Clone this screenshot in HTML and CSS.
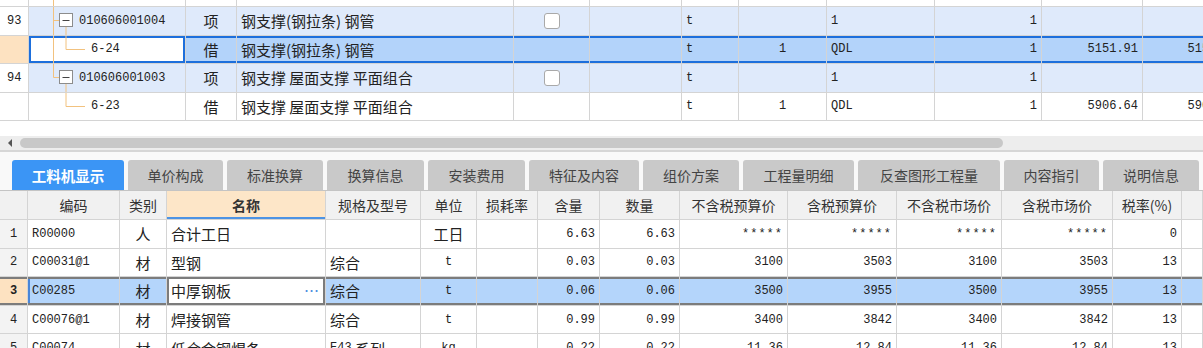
FILE: index.html
```html
<!DOCTYPE html>
<html lang="zh">
<head>
<meta charset="utf-8">
<link rel="stylesheet" href="styles.css">
</head>
<body>
<div class="page">
  <div class="tgrid">
    <div class="trow part">
      <div class="cell"></div>
      <div class="cell tree"><svg class="tl" width="50" height="7"><line x1="24.5" y1="0" x2="24.5" y2="7"/></svg></div>
      <div class="cell"></div><div class="cell"></div><div class="cell"></div><div class="cell"></div><div class="cell"></div><div class="cell"></div><div class="cell"></div><div class="cell"></div><div class="cell"></div><div class="cell"></div>
    </div>
    <div class="trow item">
      <div class="cell m num">93</div>
      <div class="cell tree m"><svg class="tl" width="50" height="29"><line x1="24.5" y1="0" x2="24.5" y2="29"/><line x1="24.5" y1="14.5" x2="30" y2="14.5"/><line x1="37" y1="20.5" x2="37" y2="29"/><rect class="bx" x="30.5" y="7.5" width="13" height="13"/><line class="mn" x1="33.5" y1="14.5" x2="40.5" y2="14.5"/></svg>010606001004</div>
      <div class="cell c">项</div>
      <div class="cell">钢支撑(钢拉条) 钢管</div>
      <div class="cell c"><span class="chk"></span></div>
      <div class="cell"></div>
      <div class="cell m">t</div>
      <div class="cell"></div>
      <div class="cell m">1</div>
      <div class="cell m r">1</div>
      <div class="cell"></div>
      <div class="cell"></div>
    </div>
    <div class="trow sel">
      <div class="cell num hl"></div>
      <div class="cell tree m"><svg class="tl" width="62" height="29"><line x1="24.5" y1="0" x2="24.5" y2="29"/><line x1="37" y1="0" x2="37" y2="14.5"/><line x1="37" y1="14.5" x2="56" y2="14.5"/></svg>6-24</div>
      <div class="cell c">借</div>
      <div class="cell">钢支撑(钢拉条) 钢管</div>
      <div class="cell"></div>
      <div class="cell"></div>
      <div class="cell m">t</div>
      <div class="cell m c">1</div>
      <div class="cell m">QDL</div>
      <div class="cell m r">1</div>
      <div class="cell m r">5151.91</div>
      <div class="cell m r">5151.91</div>
    </div>
    <div class="trow item">
      <div class="cell m num">94</div>
      <div class="cell tree m"><svg class="tl" width="50" height="29"><line x1="24.5" y1="0" x2="24.5" y2="14.5"/><line x1="24.5" y1="14.5" x2="30" y2="14.5"/><line x1="37" y1="20.5" x2="37" y2="29"/><rect class="bx" x="30.5" y="7.5" width="13" height="13"/><line class="mn" x1="33.5" y1="14.5" x2="40.5" y2="14.5"/></svg>010606001003</div>
      <div class="cell c">项</div>
      <div class="cell">钢支撑 屋面支撑 平面组合</div>
      <div class="cell c"><span class="chk"></span></div>
      <div class="cell"></div>
      <div class="cell m">t</div>
      <div class="cell"></div>
      <div class="cell m">1</div>
      <div class="cell m r">1</div>
      <div class="cell"></div>
      <div class="cell"></div>
    </div>
    <div class="trow">
      <div class="cell num"></div>
      <div class="cell tree m"><svg class="tl" width="62" height="29"><line x1="37" y1="0" x2="37" y2="14.5"/><line x1="37" y1="14.5" x2="56" y2="14.5"/></svg>6-23</div>
      <div class="cell c">借</div>
      <div class="cell">钢支撑 屋面支撑 平面组合</div>
      <div class="cell"></div>
      <div class="cell"></div>
      <div class="cell m">t</div>
      <div class="cell m c">1</div>
      <div class="cell m">QDL</div>
      <div class="cell m r">1</div>
      <div class="cell m r">5906.64</div>
      <div class="cell m r">5906.64</div>
    </div>
  </div>

  <div class="spacer"></div>
  <div class="hscroll">
    <span class="arrow"></span>
    <span class="thumb"></span>
  </div>

  <div class="tabbar">
    <div class="tab active">工料机显示</div>
    <div class="tab">单价构成</div>
    <div class="tab">标准换算</div>
    <div class="tab">换算信息</div>
    <div class="tab">安装费用</div>
    <div class="tab">特征及内容</div>
    <div class="tab">组价方案</div>
    <div class="tab">工程量明细</div>
    <div class="tab">反查图形工程量</div>
    <div class="tab">内容指引</div>
    <div class="tab">说明信息</div>
  </div>

  <div class="bgrid">
    <div class="brow head">
      <div class="cell rn"></div>
      <div class="cell c">编码</div>
      <div class="cell c">类别</div>
      <div class="cell c namehead">名称</div>
      <div class="cell c">规格及型号</div>
      <div class="cell c">单位</div>
      <div class="cell c">损耗率</div>
      <div class="cell c">含量</div>
      <div class="cell c">数量</div>
      <div class="cell c">不含税预算价</div>
      <div class="cell c">含税预算价</div>
      <div class="cell c">不含税市场价</div>
      <div class="cell c">含税市场价</div>
      <div class="cell c">税率(%)</div>
      <div class="cell"></div>
    </div>
    <div class="brow">
      <div class="cell rn m">1</div>
      <div class="cell m">R00000</div>
      <div class="cell c">人</div>
      <div class="cell">合计工日</div>
      <div class="cell"></div>
      <div class="cell c">工日</div>
      <div class="cell"></div>
      <div class="cell m r">6.63</div>
      <div class="cell m r">6.63</div>
      <div class="cell m r star">*****</div>
      <div class="cell m r star">*****</div>
      <div class="cell m r star">*****</div>
      <div class="cell m r star">*****</div>
      <div class="cell m r">0</div>
      <div class="cell"></div>
    </div>
    <div class="brow">
      <div class="cell rn m">2</div>
      <div class="cell m">C00031@1</div>
      <div class="cell c">材</div>
      <div class="cell">型钢</div>
      <div class="cell">综合</div>
      <div class="cell m c">t</div>
      <div class="cell"></div>
      <div class="cell m r">0.03</div>
      <div class="cell m r">0.03</div>
      <div class="cell m r">3100</div>
      <div class="cell m r">3503</div>
      <div class="cell m r">3100</div>
      <div class="cell m r">3503</div>
      <div class="cell m r">13</div>
      <div class="cell"></div>
    </div>
    <div class="brow bsel">
      <div class="cell rn m">3</div>
      <div class="cell m code">C00285</div>
      <div class="cell c">材</div>
      <div class="cell edit"><span>中厚钢板</span><span class="dots">⋯</span></div>
      <div class="cell">综合</div>
      <div class="cell m c">t</div>
      <div class="cell"></div>
      <div class="cell m r">0.06</div>
      <div class="cell m r">0.06</div>
      <div class="cell m r">3500</div>
      <div class="cell m r">3955</div>
      <div class="cell m r">3500</div>
      <div class="cell m r">3955</div>
      <div class="cell m r">13</div>
      <div class="cell"></div>
    </div>
    <div class="brow">
      <div class="cell rn m">4</div>
      <div class="cell m">C00076@1</div>
      <div class="cell c">材</div>
      <div class="cell">焊接钢管</div>
      <div class="cell">综合</div>
      <div class="cell m c">t</div>
      <div class="cell"></div>
      <div class="cell m r">0.99</div>
      <div class="cell m r">0.99</div>
      <div class="cell m r">3400</div>
      <div class="cell m r">3842</div>
      <div class="cell m r">3400</div>
      <div class="cell m r">3842</div>
      <div class="cell m r">13</div>
      <div class="cell"></div>
    </div>
    <div class="brow">
      <div class="cell rn m">5</div>
      <div class="cell m">C00074</div>
      <div class="cell c">材</div>
      <div class="cell">低合金钢焊条</div>
      <div class="cell"><span class="m">E43</span>&nbsp;系列</div>
      <div class="cell m c">kg</div>
      <div class="cell"></div>
      <div class="cell m r">0.22</div>
      <div class="cell m r">0.22</div>
      <div class="cell m r">11.36</div>
      <div class="cell m r">12.84</div>
      <div class="cell m r">11.36</div>
      <div class="cell m r">12.84</div>
      <div class="cell m r">13</div>
      <div class="cell"></div>
    </div>
  </div>
</div>
</body>
</html>
```

FILE: styles.css
```css
html, body {
  margin: 0;
  padding: 0;
  background: #ffffff;
  overflow: hidden;
}
body {
  width: 1203px;
  height: 348px;
  font-family: "Noto Sans CJK SC", "Noto Sans", sans-serif;
  font-size: 15px;
  color: #222;
}
.page {
  width: 1203px;
  height: 348px;
  overflow: hidden;
}

.cell {
  box-sizing: border-box;
  border-right: 1px solid #d4d4d4;
  display: flex;
  align-items: center;
  padding: 0 4px;
  overflow: hidden;
  white-space: nowrap;
  min-width: 0;
}
.m {
  font-family: "Liberation Mono", "Noto Sans CJK SC", monospace;
  font-size: 12px;
}
.c { justify-content: center; }
.r { justify-content: flex-end; }

/* top grid */
.tgrid {
  width: 1243px;
}
.trow {
  display: grid;
  grid-template-columns: 29px 157px 51px 277px 76px 92px 57px 88px 108px 107px 101px 100px;
  height: 28.5px;
  box-sizing: border-box;
  border-bottom: 1px solid #d4d4d4;
}
.trow.part { height: 7px; }
.trow .num { padding-left: 7px; background: #fff; }
.trow .tree { padding: 0; }
.tl { flex: none; display: block; }
.tl line { stroke: #f2c27f; stroke-width: 1; }
.tl .bx { fill: #fff; stroke: #8c8c8c; stroke-width: 1; }
.tl .mn { stroke: #444; }
.trow.item .cell { background: #dfeafb; }
.trow.item .cell.num { background: #fff; }
.trow.sel .cell { background: #b3d3fa; box-shadow: inset 0 2px 0 #1d6fdc, inset 0 -2px 0 #1d6fdc; }
.trow.sel .cell.tree { background: #fff; box-shadow: inset 0 0 0 2px #1d6fdc; }
.trow.sel .cell.num { background: #fde2c1; box-shadow: none; }
.chk {
  width: 16px;
  height: 16px;
  box-sizing: border-box;
  border: 1px solid #a9a9a9;
  border-radius: 3px;
  background: #fff;
}

/* scrollbar */
.spacer { height: 15px; background: #fff; }
.hscroll {
  height: 14px;
  background: #ededed;
  display: flex;
  align-items: center;
  padding-left: 8px;
  border-bottom: 2px solid #d6d6d6;
}
.arrow {
  width: 0;
  height: 0;
  border-top: 4px solid transparent;
  border-bottom: 4px solid transparent;
  border-right: 4px solid #555;
}
.thumb {
  margin-left: 8px;
  width: 983px;
  height: 10px;
  border-radius: 5px;
  background: #c8c8c8;
}

/* tabs */
.tabbar {
  height: 38px;
  background: #f9f9f9;
  display: flex;
  align-items: flex-end;
  gap: 4px;
  padding-left: 12px;
  box-sizing: border-box;
}
.tab {
  flex: none;
  height: 30px;
  width: 96px;
  background: #c9c9c9;
  color: #444;
  font-size: 14px;
  display: flex;
  align-items: center;
  justify-content: center;
  border-radius: 3px 3px 0 0;
  white-space: nowrap;
}
.tab:nth-child(1) { width: 112px; }
.tab:nth-child(2) { width: 95px; }
.tab:nth-child(4),
.tab:nth-child(5) { width: 97px; }
.tab:nth-child(6) { width: 110px; }
.tab:nth-child(8) { width: 111px; }
.tab:nth-child(9) { width: 142px; }
.tab:nth-child(10) { width: 95px; }
.tab.active {
  background: #3b95f5;
  color: #fff;
  font-weight: bold;
  font-size: 14.5px;
}

/* bottom grid */
.bgrid {
  border-top: 1px solid #c4c4c4;
}
.brow {
  display: grid;
  grid-template-columns: 28px 92px 47px 159px 95px 56px 61px 62px 80px 108px 109px 105px 111px 69px 21px;
  height: 28.6px;
  box-sizing: border-box;
  border-bottom: 1px solid #d4d4d4;
}
.brow.head { height: 29px; }
.brow.head .cell {
  background: #f1f1f1;
  font-size: 14px;
  color: #333;
}
.brow.head .namehead {
  background: #fde6c8;
  font-weight: bold;
  box-shadow: inset 0 -2px 0 #4d93e4;
}
.brow .rn {
  justify-content: center;
  background: #f3f3f3;
  padding: 0;
}
.brow.bsel .cell {
  background: #b4d5fb;
  box-shadow: inset 0 2px 0 #7c7c7c, inset 0 -2px 0 #7c7c7c;
}
.brow.bsel .rn {
  background: #fde2c1;
  font-weight: bold;
}
.brow.bsel .code {
  box-shadow: inset 0 2px 0 #7c7c7c, inset 0 -2px 0 #7c7c7c, inset 2px 0 0 #4a86d8;
}
.brow.bsel .edit {
  background: #fff;
  box-shadow: inset 0 0 0 2px #7c7c7c;
  justify-content: space-between;
}
.dots {
  color: #4a8ee0;
  font-size: 15px;
  padding-right: 2px;
}
.star { letter-spacing: 1px; }
```
